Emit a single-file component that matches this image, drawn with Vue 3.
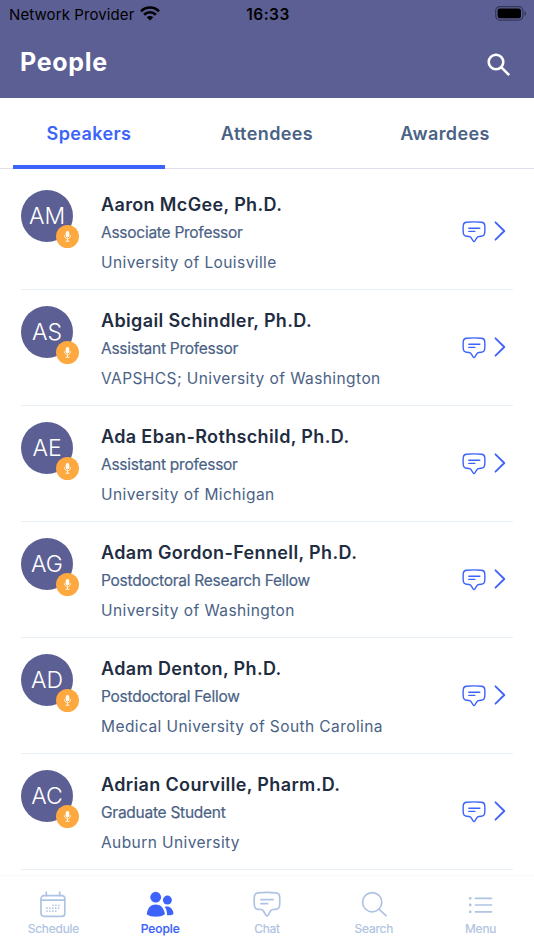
<template>
  <div class="app">
    <header class="header">
      <div class="status-bar">
        <div class="carrier">
          <span>Network Provider</span>
          <svg class="wifi" viewBox="0 0 20 15">
            <path d="M1 5.3C6 .2 14 .2 19 5.3" />
            <path d="M4.1 8.7C7.5 5.4 12.5 5.4 15.9 8.7" />
            <path class="wifi-dot" d="M10 14.5 6.7 11.2C8.6 9.5 11.4 9.5 13.3 11.2Z" />
          </svg>
        </div>
        <span class="time">16:33</span>
        <svg class="battery" viewBox="0 0 32 15">
          <rect class="shell" x=".7" y=".7" width="27.2" height="13.4" rx="4" />
          <rect x="2.6" y="2.6" width="23.4" height="9.6" rx="2.2" />
          <path class="cap" d="M29.5 5v5c2-.8 2-4.2 0-5Z" />
        </svg>
      </div>
      <div class="title-row">
        <h1>People</h1>
        <svg class="header-search" viewBox="0 0 24 24">
          <circle cx="9" cy="9" r="7.3" />
          <path d="M14.2 14.2 22.2 22.2" />
        </svg>
      </div>
    </header>

    <nav class="tabs">
      <button v-for="tab in tabs" :key="tab" :class="{ active: tab === activeTab }" @click="activeTab = tab">{{ tab }}</button>
    </nav>

    <main class="people">
      <article v-for="person in people" :key="person.name" class="person">
        <div class="avatar">
          {{ person.initials }}
          <span class="badge">
            <svg viewBox="0 0 10 12">
              <rect x="3" y="0" width="4" height="7" rx="2" />
              <path d="M1.6 5.2c0 4.4 6.8 4.4 6.8 0M5 8.4v2.6M3.2 11.2h3.6" />
            </svg>
          </span>
        </div>
        <div class="info">
          <h2>{{ person.name }}</h2>
          <p class="role">{{ person.role }}</p>
          <p class="place">{{ person.place }}</p>
        </div>
        <svg class="message" viewBox="0 0 24 22">
          <path d="M4.5 1.3Q12 .5 19.5 1.3 22.4 1.6 22.7 4.2 23.1 8 22.7 12 22.4 15 19.3 15.3L17 15.5Q15.5 15.6 14.8 16.8L12.9 19.9Q12 21.2 11.1 19.9L9.2 16.8Q8.5 15.6 7 15.5L4.7 15.3Q1.6 15 1.3 12 .9 8 1.3 4.2 1.6 1.6 4.5 1.3Z" />
          <path d="M6.8 7.2h11M6.8 10.4h6" />
        </svg>
        <svg class="chevron" viewBox="0 0 12 20"><path d="M1.5 1.3 10.3 10 1.5 18.7" /></svg>
      </article>
    </main>

    <footer class="bottom-nav">
      <button class="nav-item">
        <svg viewBox="0 0 28 28">
          <rect x="2" y="4.6" width="23.8" height="20.8" rx="3" />
          <path d="M2 9.2h23.8M7.3 1v3.6M20.7 1v3.6" />
          <path class="dots" d="M14 14.3h8M8 17.2h13M8 20.1h11" />
        </svg>
        <span>Schedule</span>
      </button>
      <button class="nav-item active">
        <svg class="filled" viewBox="0 0 28 28">
          <circle cx="9.7" cy="6.2" r="5.4" />
          <circle cx="21.4" cy="9.1" r="4.5" />
          <path d="M.8 22.6C1.7 16.8 5 13.6 9.7 13.6s8 3.2 9.1 9C19.1 26.7.5 26.7.8 22.6Z" />
          <path d="M18.6 15.7c4.6-1.3 8.1 1.6 8.8 6 .4 2.2-3 2.8-6.3 2.5 0-3.4-.7-6.2-2.5-8.5Z" />
        </svg>
        <span>People</span>
      </button>
      <button class="nav-item">
        <svg viewBox="0 0 28 28">
          <path d="M5 1.8Q14 .9 23 1.8 26.2 2.1 26.6 5.2 27 9.8 26.6 14.5 26.2 18 22.8 18.3L20 18.5Q18.5 18.6 17.5 20L15.2 24Q14 25.7 12.8 24L10.5 20Q9.5 18.6 8 18.5L5.2 18.3Q1.8 18 1.4 14.5 1 9.8 1.4 5.2 1.8 2.1 5 1.8Z" />
          <path d="M8 8.7h12M8 12.7h6.6" />
        </svg>
        <span>Chat</span>
      </button>
      <button class="nav-item">
        <svg viewBox="0 0 28 28">
          <circle cx="12.2" cy="11.2" r="9.6" />
          <path d="M19 18.1 26 24.7" />
        </svg>
        <span>Search</span>
      </button>
      <button class="nav-item">
        <svg class="menu" viewBox="0 0 28 28">
          <path d="M8.5 7.3h16M8.5 14h16M8.5 20.8h16" />
          <path class="bullets" d="M3.2 7.3h.01M3.2 14h.01M3.2 20.8h.01" />
        </svg>
        <span>Menu</span>
      </button>
    </footer>
  </div>
</template>

<script setup>
import { ref } from 'vue'

const tabs = ['Speakers', 'Attendees', 'Awardees']
const activeTab = ref('Speakers')

const people = [
  { initials: 'AM', name: 'Aaron McGee, Ph.D.', role: 'Associate Professor', place: 'University of Louisville' },
  { initials: 'AS', name: 'Abigail Schindler, Ph.D.', role: 'Assistant Professor', place: 'VAPSHCS; University of Washington' },
  { initials: 'AE', name: 'Ada Eban-Rothschild, Ph.D.', role: 'Assistant professor', place: 'University of Michigan' },
  { initials: 'AG', name: 'Adam Gordon-Fennell, Ph.D.', role: 'Postdoctoral Research Fellow', place: 'University of Washington' },
  { initials: 'AD', name: 'Adam Denton, Ph.D.', role: 'Postdoctoral Fellow', place: 'Medical University of South Carolina' },
  { initials: 'AC', name: 'Adrian Courville, Pharm.D.', role: 'Graduate Student', place: 'Auburn University' }
]
</script>

<style>
body {
  margin: 0;
  background: #fff;
}
</style>

<style scoped>
* {
  box-sizing: border-box;
}
.app {
  height: 950px;
  display: flex;
  flex-direction: column;
  overflow: hidden;
  background: #fff;
  font-family: Inter, "Liberation Sans", sans-serif;
}
h1, h2, p {
  margin: 0;
}
button {
  background: none;
  border: none;
  padding: 0;
  font-family: inherit;
}
svg {
  fill: none;
  stroke: currentColor;
  stroke-linecap: round;
  stroke-linejoin: round;
  flex: none;
}
.header {
  height: 98px;
  flex: none;
  background: #5c5f93;
}
.status-bar {
  height: 28px;
  padding: 0 7px 0 9px;
  display: grid;
  grid-template-columns: 1fr auto 1fr;
  align-items: center;
  color: #000;
  font-size: 15px;
}
.carrier {
  display: flex;
  align-items: center;
  gap: 6px;
  letter-spacing: 0.1px;
}
.wifi {
  width: 20px;
  height: 15px;
  stroke-width: 2.6;
  stroke-linecap: butt;
  margin-top: -2px;
}
.wifi-dot {
  fill: currentColor;
  stroke: none;
}
.time {
  font-weight: 600;
  font-size: 15.5px;
  letter-spacing: 0.5px;
}
.battery {
  width: 32px;
  height: 15px;
  justify-self: end;
  fill: #000;
  stroke: none;
  margin-top: -1px;
}
.battery .shell {
  fill: none;
  stroke: #35375a;
  stroke-width: 1.2;
}
.battery .cap {
  fill: #35375a;
}
.title-row {
  height: 70px;
  padding: 0 23px 0 20px;
  display: flex;
  align-items: center;
  justify-content: space-between;
  color: #fff;
}
h1 {
  margin-top: -2px;
  font-size: 25px;
  line-height: 30px;
  font-weight: 700;
  letter-spacing: 0.7px;
}
.header-search {
  width: 24px;
  height: 24px;
  margin-top: 3px;
  stroke-width: 2.6;
  stroke-linecap: butt;
}
.tabs {
  height: 71px;
  flex: none;
  display: grid;
  grid-template-columns: repeat(3, 1fr);
  border-bottom: 1px solid #e3dcec;
}
.tabs button {
  height: 71px;
  margin: 0 13px;
  padding-top: 4px;
  border-bottom: 4px solid transparent;
  color: #4a6285;
  font-size: 18px;
  font-weight: 600;
  letter-spacing: 0.4px;
}
.tabs button.active {
  color: #3d63fb;
  border-bottom-color: #3d63fb;
}
.people {
  flex: 1;
  min-height: 0;
  padding: 5px 21px 0;
}
.person {
  height: 116px;
  display: flex;
  border-bottom: 1px solid #e8eff6;
}
.avatar {
  position: relative;
  width: 52px;
  height: 52px;
  margin-top: 16px;
  border-radius: 50%;
  flex: none;
  background: #5c5f93;
  color: #fff;
  font-size: 23px;
  font-weight: 300;
  line-height: 52px;
  text-align: center;
}
.badge {
  position: absolute;
  right: -6px;
  bottom: -6px;
  width: 23px;
  height: 23px;
  border-radius: 50%;
  background: #fea940;
  display: flex;
  align-items: center;
  justify-content: center;
}
.badge svg {
  width: 9px;
  height: 11px;
  stroke-width: 0.9;
}
.badge rect {
  fill: #fff;
  stroke: none;
}
.info {
  flex: 1;
  padding: 17px 0 0 28px;
  white-space: nowrap;
}
h2 {
  color: #1f2d42;
  font-size: 18px;
  line-height: 28px;
  font-weight: 600;
  letter-spacing: 0.36px;
}
.role,
.place {
  color: #4a6285;
  font-size: 15.5px;
}
.role {
  line-height: 28px;
  letter-spacing: -0.26px;
  -webkit-text-stroke: 0.2px currentColor;
}
.place {
  line-height: 32px;
  letter-spacing: 0.42px;
}
.message,
.chevron {
  color: #3d63fb;
}
.message {
  width: 24px;
  height: 22px;
  margin: 47px 8px 0 0;
  stroke-width: 1.4;
}
.chevron {
  width: 12px;
  height: 20px;
  margin: 47px 7px 0 0;
  stroke-width: 1.8;
}
.bottom-nav {
  height: 75px;
  flex: none;
  display: grid;
  grid-template-columns: repeat(5, 1fr);
  border-top: 1px solid #fafafb;
  background: #fff;
}
.nav-item {
  display: flex;
  flex-direction: column;
  align-items: center;
  padding-top: 15px;
  color: #afc3e3;
}
.nav-item svg {
  width: 28px;
  height: 28px;
  stroke-width: 1.7;
}
.nav-item .filled {
  fill: currentColor;
  stroke: none;
}
.nav-item .dots {
  stroke-width: 1.8;
  stroke-dasharray: 0.01 2.9;
}
.nav-item .bullets {
  stroke-width: 2.8;
}
.nav-item span {
  font-size: 12px;
  line-height: 18px;
  letter-spacing: -0.2px;
  margin-top: 1px;
  -webkit-text-stroke: 0.2px currentColor;
}
.nav-item.active span {
  letter-spacing: -0.1px;
}
.nav-item.active {
  color: #3d63fb;
}
.nav-item.active span {
  font-weight: 500;
}
</style>
